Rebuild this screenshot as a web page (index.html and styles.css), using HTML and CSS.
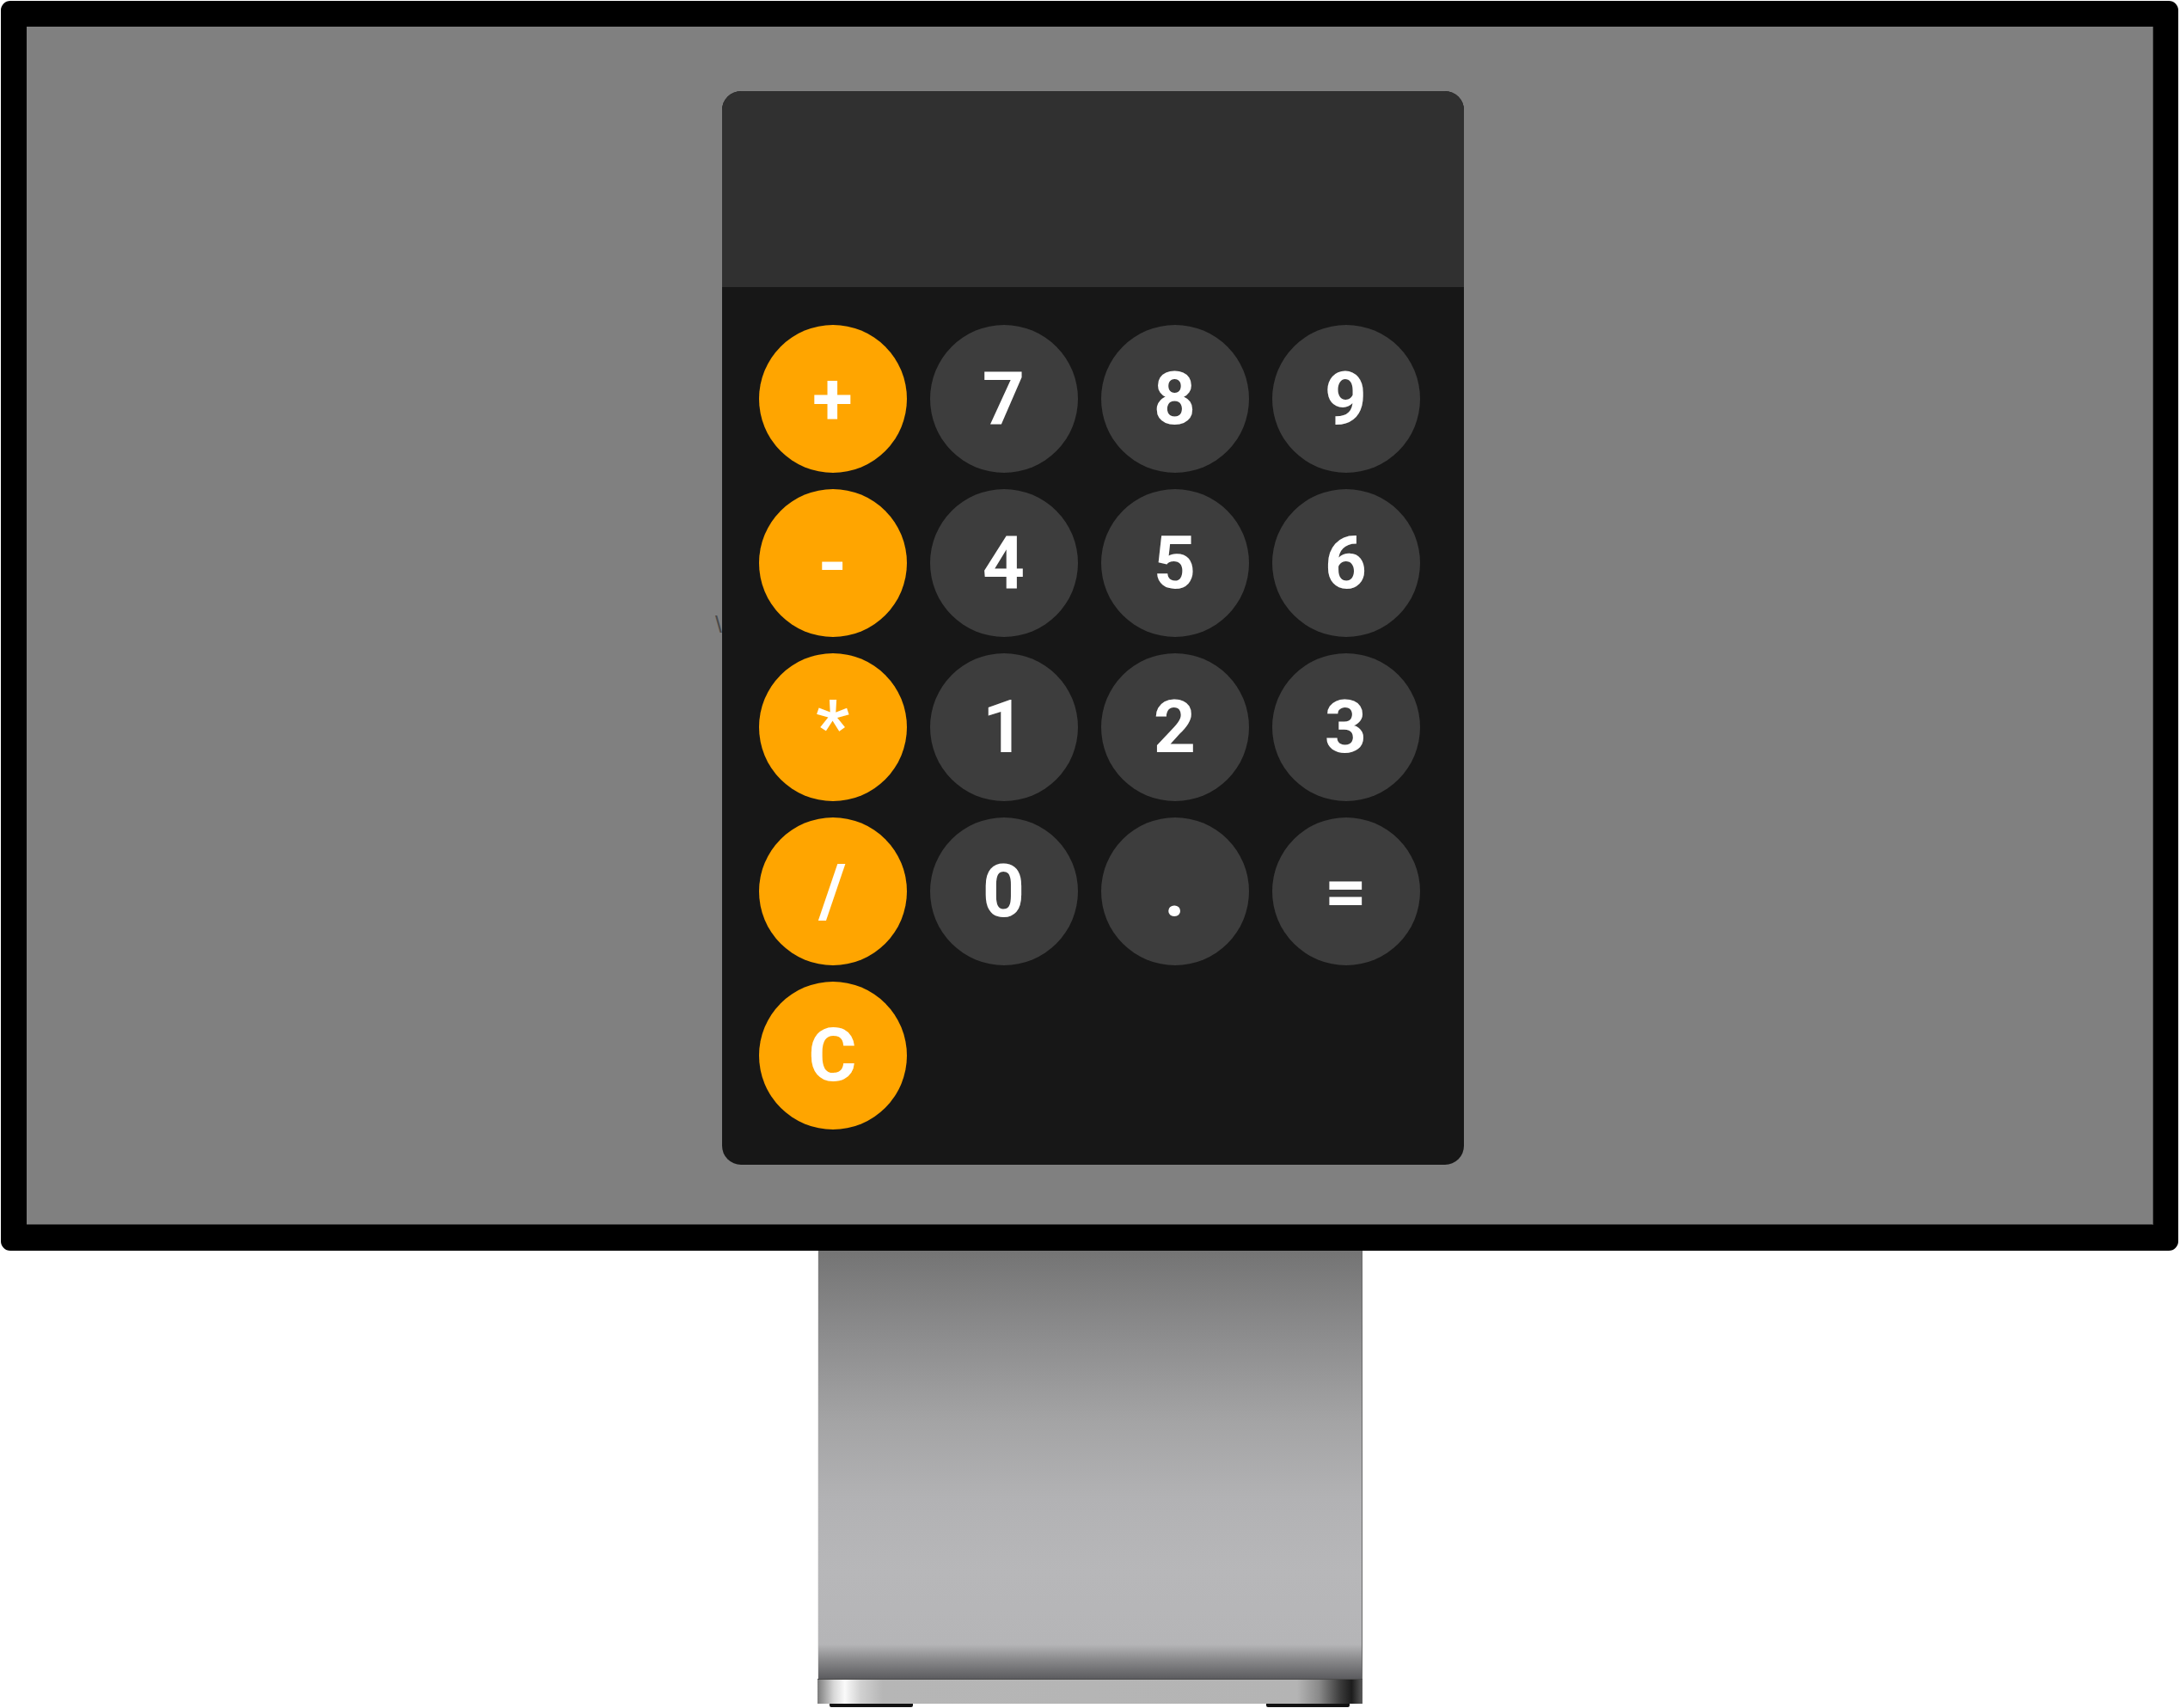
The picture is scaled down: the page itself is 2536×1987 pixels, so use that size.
FILE: index.html
```html
<!DOCTYPE html>
<html lang="en">
<head>
<meta charset="utf-8">
<title>Calculator</title>
<link rel="stylesheet" href="styles.css">
</head>
<body>
<div class="monitor">
  <div class="screen">
    <span class="stray">\</span>
    <div class="calculator">
      <div class="display"></div>
      <div class="keypad">
        <div class="key op">+</div>
        <div class="key num">7</div>
        <div class="key num">8</div>
        <div class="key num">9</div>
        <div class="key op">-</div>
        <div class="key num">4</div>
        <div class="key num">5</div>
        <div class="key num">6</div>
        <div class="key op">*</div>
        <div class="key num">1</div>
        <div class="key num">2</div>
        <div class="key num">3</div>
        <div class="key op">/</div>
        <div class="key num">0</div>
        <div class="key num">.</div>
        <div class="key num">=</div>
        <div class="key op">C</div>
      </div>
    </div>
  </div>
</div>
<div class="stand">
  <div class="neck"></div>
  <div class="base"></div>
  <div class="feet">
    <span class="foot"></span>
    <span class="foot"></span>
  </div>
</div>
</body>
</html>
```
FILE: styles.css
```css
* { box-sizing: border-box; }

html, body {
  margin: 0;
  padding: 0;
  background: #ffffff;
}

body {
  width: 2536px;
  height: 1987px;
  overflow: hidden;
  font-family: "Liberation Sans", Arial, sans-serif;
}

.monitor {
  margin: 1px 2px 0 1px;
  height: 1454px;
  background: #000;
  border-radius: 11px;
  padding: 30px 29px 30px 30px;
  display: flex;
}

.screen {
  position: relative;
  flex: 1;
  background: #808080;
  border-bottom: 1px solid #3c3c3c;
  border-right: 1px solid #555;
  display: flex;
  align-items: center;
  justify-content: center;
  padding-left: 7px;
  padding-top: 5px;
}

.stray {
  position: absolute;
  left: 801px;
  top: 680px;
  font-size: 28px;
  line-height: normal;
  color: #4a4a4a;
  font-weight: 400;
}

.calculator {
  position: relative;
  width: 863px;
  height: 1249px;
  background: #171717;
  border-radius: 22px;
  overflow: hidden;
  display: flex;
  flex-direction: column;
}

.display {
  height: 228px;
  background: #303030;
  flex: none;
}

.keypad {
  display: grid;
  grid-template-columns: repeat(4, 172px);
  grid-auto-rows: 172px;
  column-gap: 27px;
  row-gap: 19px;
  padding: 44px 51px 42px 43px;
}

.key {
  width: 172px;
  height: 172px;
  border-radius: 50%;
  color: #ffffff;
  font-family: Roboto, "Liberation Sans", Arial, sans-serif;
  font-weight: 700;
  font-size: 86px;
  line-height: 1;
  display: flex;
  align-items: center;
  justify-content: center;
}

.op { background: #ffa500; }
.num { background: #3d3d3d; }

.stand {
  width: 634px;
  margin: 0 auto;
  display: flex;
  flex-direction: column;
}

.neck {
  height: 498px;
  background: linear-gradient(to bottom, #747474 0%, #8a8a8b 18%, #a4a4a5 40%, #b2b2b4 58%, #b7b7b9 75%, #b5b5b7 92%, #8a8a8c 95.5%, #5c5c5f 100%);
  border-left: 1px solid #e8e8e8;
  border-right: 1px solid #6a6a6a;
}

.base {
  height: 29px;
  background: linear-gradient(to right, #7c7c7c 0%, #d8d8d8 3%, #fafafa 5%, #d0d0d0 8%, #b6b6b6 12%, #b4b4b4 88%, #8a8a8a 92%, #3a3a3a 96%, #1c1c1c 98%, #5a5a5a 100%);
  border-top: 1px solid #4a4a4a;
}

.feet {
  height: 5px;
  display: flex;
  justify-content: space-between;
  padding: 0 15px 0 14px;
}

.foot {
  width: 97px;
  height: 4px;
  background: #111;
  border-radius: 0 0 2px 2px;
}
```
